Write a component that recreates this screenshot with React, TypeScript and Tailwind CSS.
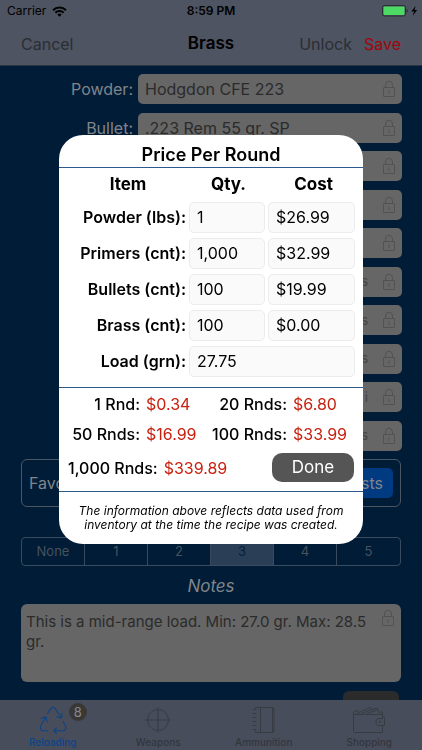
import type { ReactNode } from "react";

const fields = [
  { label: "Powder:", value: "Hodgdon CFE 223", unit: "" },
  { label: "Bullet:", value: ".223 Rem 55 gr. SP", unit: "" },
  { label: "", value: "", unit: "" },
  { label: "", value: "", unit: "" },
  { label: "", value: "", unit: "" },
  { label: "", value: "", unit: "s" },
  { label: "", value: "", unit: "s" },
  { label: "", value: "", unit: "s" },
  { label: "", value: "", unit: "i" },
  { label: "", value: "", unit: "s" },
];

const items = [
  { id: "powder", label: "Powder (lbs):", qty: "1", cost: "$26.99" },
  { id: "primers", label: "Primers (cnt):", qty: "1,000", cost: "$32.99" },
  { id: "bullets", label: "Bullets (cnt):", qty: "100", cost: "$19.99" },
  { id: "brass", label: "Brass (cnt):", qty: "100", cost: "$0.00" },
];

const prices = [
  { label: "1 Rnd:", value: "$0.34" },
  { label: "20 Rnds:", value: "$6.80" },
  { label: "50 Rnds:", value: "$16.99" },
  { label: "100 Rnds:", value: "$33.99" },
];

const ratings = ["None", "1", "2", "3", "4", "5"];

const LockIcon = () => (
  <svg width="14" height="18" viewBox="0 0 14 18" fill="none" stroke="#525252" className="shrink-0">
    <rect x="1.5" y="7.5" width="11" height="9" rx="0.5" />
    <path d="M3.5 7.5V5a3.5 3.8 0 0 1 7 0v2.5M7 10.5v3.5" />
  </svg>
);

const WifiIcon = () => (
  <svg width="15" height="11" viewBox="0 0 15 11" fill="none" stroke="#000" strokeWidth="2">
    <path d="M1 4.2a9.3 9.3 0 0 1 13 0M3.4 6.7a5.9 5.9 0 0 1 8.2 0" />
    <path d="M7.5 10.8 5.3 8.6a3.1 3.1 0 0 1 4.4 0z" fill="#000" stroke="none" />
  </svg>
);

const BatteryIcon = () => (
  <svg width="37" height="12" viewBox="0 0 37 12">
    <rect x="0.5" y="0.5" width="23" height="10.5" rx="2" fill="none" stroke="#2a2d33" />
    <rect x="1.5" y="1.5" width="21" height="8.5" rx="1" fill="#4cd964" />
    <path d="M24.5 4v3.6c1-.4 1.4-1 1.4-1.8s-.4-1.4-1.4-1.8z" fill="#2a2d33" />
    <path d="M33.6.8 29.4 6.4h2.6l-1.2 4.4 4.4-5.7h-2.7z" fill="#000" />
  </svg>
);

const ReloadingIcon = () => (
  <svg width="28" height="28" viewBox="0 0 28 28" fill="none" stroke="#0d4489" strokeWidth="1.1" strokeLinejoin="round" strokeLinecap="round">
    <path d="M8.5 7.5 11.8 2.6C13 .9 15 .9 16.2 2.6L22.5 12M23 7.2 22.5 12 17.7 10.8" />
    <path d="M24.2 15.5l2.3 4.6c1 1.9-.2 4.7-2.6 4.7H14.5M17.5 22l-3 2.8 3 2.8" />
    <path d="M8.6 24.8H4.2c-2.4 0-3.6-2.8-2.6-4.7L6.8 11M2.2 12.2 6.8 11l1.4 4.6" />
  </svg>
);

const WeaponsIcon = () => (
  <svg width="28" height="28" viewBox="0 0 28 28" fill="none" stroke="#383b42">
    <circle cx="14" cy="14" r="10.5" />
    <path d="M14 1v26M1 14h26" />
  </svg>
);

const AmmunitionIcon = () => (
  <svg width="28" height="28" viewBox="0 0 28 28" fill="none" stroke="#383b42">
    <path d="M5.5 3.5v-2h17c1 0 1.5.5 1.5 1.5v22c0 1-.5 1.5-1.5 1.5h-17v-2" />
    <path d="M10.5 1.5v25M22.5 1.5v25M2.5 3.5h4M2.5 7.5h4M2.5 11.5h4M2.5 15.5h4M2.5 19.5h4M2.5 23.5h4" />
  </svg>
);

const ShoppingIcon = () => (
  <svg width="34" height="28" viewBox="0 0 34 28" fill="none" stroke="#383b42" strokeLinejoin="round">
    <path d="M30.5 13V8.5H3A1.8 1.8 0 0 1 3 5h4M1.5 6.5V25c0 1 .6 1.5 1.5 1.5h27.5V20" />
    <path d="M30.5 8.5V6h-2M5 7.5 18.5 1.5l2 2M9 7.5l16-5.5 2.5 5.5M15 7.5l10-3.5" />
    <path d="M32.5 12.5v7H27a3 3 0 0 1-3-3.5 3 3 0 0 1 3-3.5h3.5v-1.5h2z" />
    <circle cx="28" cy="16" r="0.6" />
  </svg>
);

type TabProps = {
  label: string;
  icon: ReactNode;
  active?: boolean;
  badge?: string;
};

const Tab = ({ label, icon, active, badge }: TabProps) => (
  <button
    className={`relative flex-1 flex flex-col items-center pt-1.5 text-[10px] leading-3 font-medium ${
      active ? "text-[#0d4489]" : "text-[#33363d]"
    }`}
  >
    {icon}
    <span className="mt-[2px]">{label}</span>
    {badge && (
      <span className="absolute left-1/2 ml-4 top-[3px] size-[18px] rounded-full bg-[#3a3835] text-[#85888f] text-[13px] leading-[18px] font-normal">
        {badge}
      </span>
    )}
  </button>
);

const inputStyle =
  "block h-[31px] w-full min-w-0 rounded-[5px] border border-[#ececec] bg-[#fafafa] px-[7px] text-base text-black outline-none";

const PricePopup = () => (
  <div className="fixed inset-0 flex justify-center items-start pt-[135px]">
    <section
      role="dialog"
      aria-labelledby="popup-title"
      className="w-[304px] rounded-[24px] bg-white text-black"
    >
      <h2
        id="popup-title"
        className="border-b border-[#2c5a8c] pt-2 text-center text-lg leading-6 font-semibold"
      >
        Price Per Round
      </h2>
      <div className="pr-2">
        <table className="w-full table-fixed border-separate border-spacing-0">
          <thead>
            <tr className="h-[31px] text-[17px] font-bold">
              <th scope="col" className="w-[130px] pl-2 pt-[2px]">Item</th>
              <th scope="col" className="w-[79px] pt-[2px]">Qty.</th>
              <th scope="col" className="pl-1 pt-[2px]">Cost</th>
            </tr>
          </thead>
          <tbody>
            {items.map(({ id, label, qty, cost }) => (
              <tr key={id}>
                <th scope="row" className="h-9 pr-[3px] text-right text-base font-semibold">
                  <label htmlFor={id}>{label}</label>
                </th>
                <td className="pr-[3px]">
                  <input id={id} className={inputStyle} defaultValue={qty} />
                </td>
                <td>
                  <input aria-label={`${label} cost`} className={inputStyle} defaultValue={cost} />
                </td>
              </tr>
            ))}
            <tr>
              <th scope="row" className="h-9 pr-[3px] text-right text-base font-semibold">
                <label htmlFor="load">Load (grn):</label>
              </th>
              <td colSpan={2}>
                <input id="load" className={inputStyle} defaultValue="27.75" />
              </td>
            </tr>
          </tbody>
        </table>
      </div>
      <div className="mt-2 border-y border-[#2c5a8c] pt-[1px] pb-[9px] text-base">
        <dl className="grid grid-cols-[81px_54px_81px_1fr] gap-x-[6px] leading-[30px]">
          {prices.map(({ label, value }) => (
            <div key={label} className="contents">
              <dt className="flex justify-end whitespace-nowrap font-medium">{label}</dt>
              <dd className="text-[#c8210f]">{value}</dd>
            </div>
          ))}
        </dl>
        <div className="flex items-center justify-between pt-1 pl-[9px] pr-[9px]">
          <dl className="flex gap-[6px]">
            <dt className="font-medium">1,000 Rnds:</dt>
            <dd className="text-[#c8210f]">$339.89</dd>
          </dl>
          <button className="h-[29px] w-[82px] rounded-[10px] bg-[#555] text-[17px] text-white">
            Done
          </button>
        </div>
      </div>
      <p className="px-4 pt-3 pb-3 text-center text-xs leading-[14px] italic">
        The information above reflects data used from inventory at the time the recipe was created.
      </p>
    </section>
  </div>
);

const App = () => {
  return (
    <div className="min-h-screen overflow-hidden bg-[#001c36] font-[Inter,sans-serif] text-base">
      <header className="h-[66px] border-b border-[#2b3441] bg-[#4e5461]">
        <div className="grid grid-cols-3 items-center h-[22px] px-[7px] text-xs text-black">
          <div className="flex items-center gap-[6px]">
            <span>Carrier</span>
            <WifiIcon />
          </div>
          <p className="text-center font-semibold">8:59 PM</p>
          <div className="flex justify-end -mr-1">
            <BatteryIcon />
          </div>
        </div>
        <div className="grid grid-cols-3 items-center h-[43px] px-[21px] text-base">
          <button className="text-left text-[#2b2e34]">Cancel</button>
          <h1 className="text-center text-[17px] font-semibold text-black">Brass</h1>
          <div className="flex justify-end gap-3">
            <button className="text-[#2b2e34]">Unlock</button>
            <button className="text-[#a0060e]">Save</button>
          </div>
        </div>
      </header>

      <main className="px-5 pt-2 pb-[50px]">
        <div className="flex flex-col justify-between h-[377px]">
          {fields.map(({ label, value, unit }, i) => (
            <div key={i} className="flex items-center gap-[5px]">
              <label htmlFor={`field-${i}`} className="w-[113px] shrink-0 text-right text-[#80858b]">
                {label}
              </label>
              <div className="flex flex-1 min-w-0 items-center h-[30px] rounded-[5px] bg-[#666] pl-[7px] pr-[6px] text-[#2b2b2b]">
                <input
                  id={`field-${i}`}
                  readOnly
                  className="flex-1 min-w-0 outline-none"
                  defaultValue={value}
                />
                <span className="mr-[14px] text-[13px] text-[#444]">{unit}</span>
                <LockIcon />
              </div>
            </div>
          ))}
        </div>

        <div className="mx-px mt-2 flex items-center justify-between h-12 rounded-[6px] border border-[#4b5663] px-[7px]">
          <span className="text-[#80858b]">Favorite</span>
          <button className="h-[30px] rounded-[5px] bg-[#003a80] px-[10px] text-[#80858b]">Lists</button>
        </div>

        <div className="mx-px mt-[30px] grid grid-cols-6 h-[29px] rounded-[4px] border border-[#3a4b5e] divide-x divide-[#3a4b5e] text-[13px] text-[#47525f]">
          {ratings.map((rating) => (
            <button
              key={rating}
              className={rating === "3" ? "bg-[#2a3f55] text-[#04203f]" : ""}
            >
              {rating}
            </button>
          ))}
        </div>

        <label htmlFor="notes" className="block mt-2 text-center text-[17px] leading-6 italic text-[#80858b]">
          Notes
        </label>
        <div className="mx-px mt-[6px] flex items-start rounded-[6px] bg-[#666] pl-[5px] pr-[6px] pt-[5px]">
          <textarea
            id="notes"
            readOnly
            className="flex-1 min-w-0 h-[73px] pt-[3px] resize-none overflow-hidden text-[15px] leading-5 text-[#2b2b2b] outline-none"
            defaultValue="This is a mid-range load. Min: 27.0 gr. Max: 28.5 gr."
          />
          <LockIcon />
        </div>
        <div className="mt-[9px] mr-[3px] ml-auto h-7 w-14 rounded-[6px] bg-[#2b2b2b]" />
      </main>

      <nav className="fixed bottom-0 inset-x-0 flex h-[50px] bg-[#474d5b]">
        <Tab label="Reloading" icon={<ReloadingIcon />} active badge="8" />
        <Tab label="Weapons" icon={<WeaponsIcon />} />
        <Tab label="Ammunition" icon={<AmmunitionIcon />} />
        <Tab label="Shopping" icon={<ShoppingIcon />} />
      </nav>

      <PricePopup />
    </div>
  );
};

export default App;
